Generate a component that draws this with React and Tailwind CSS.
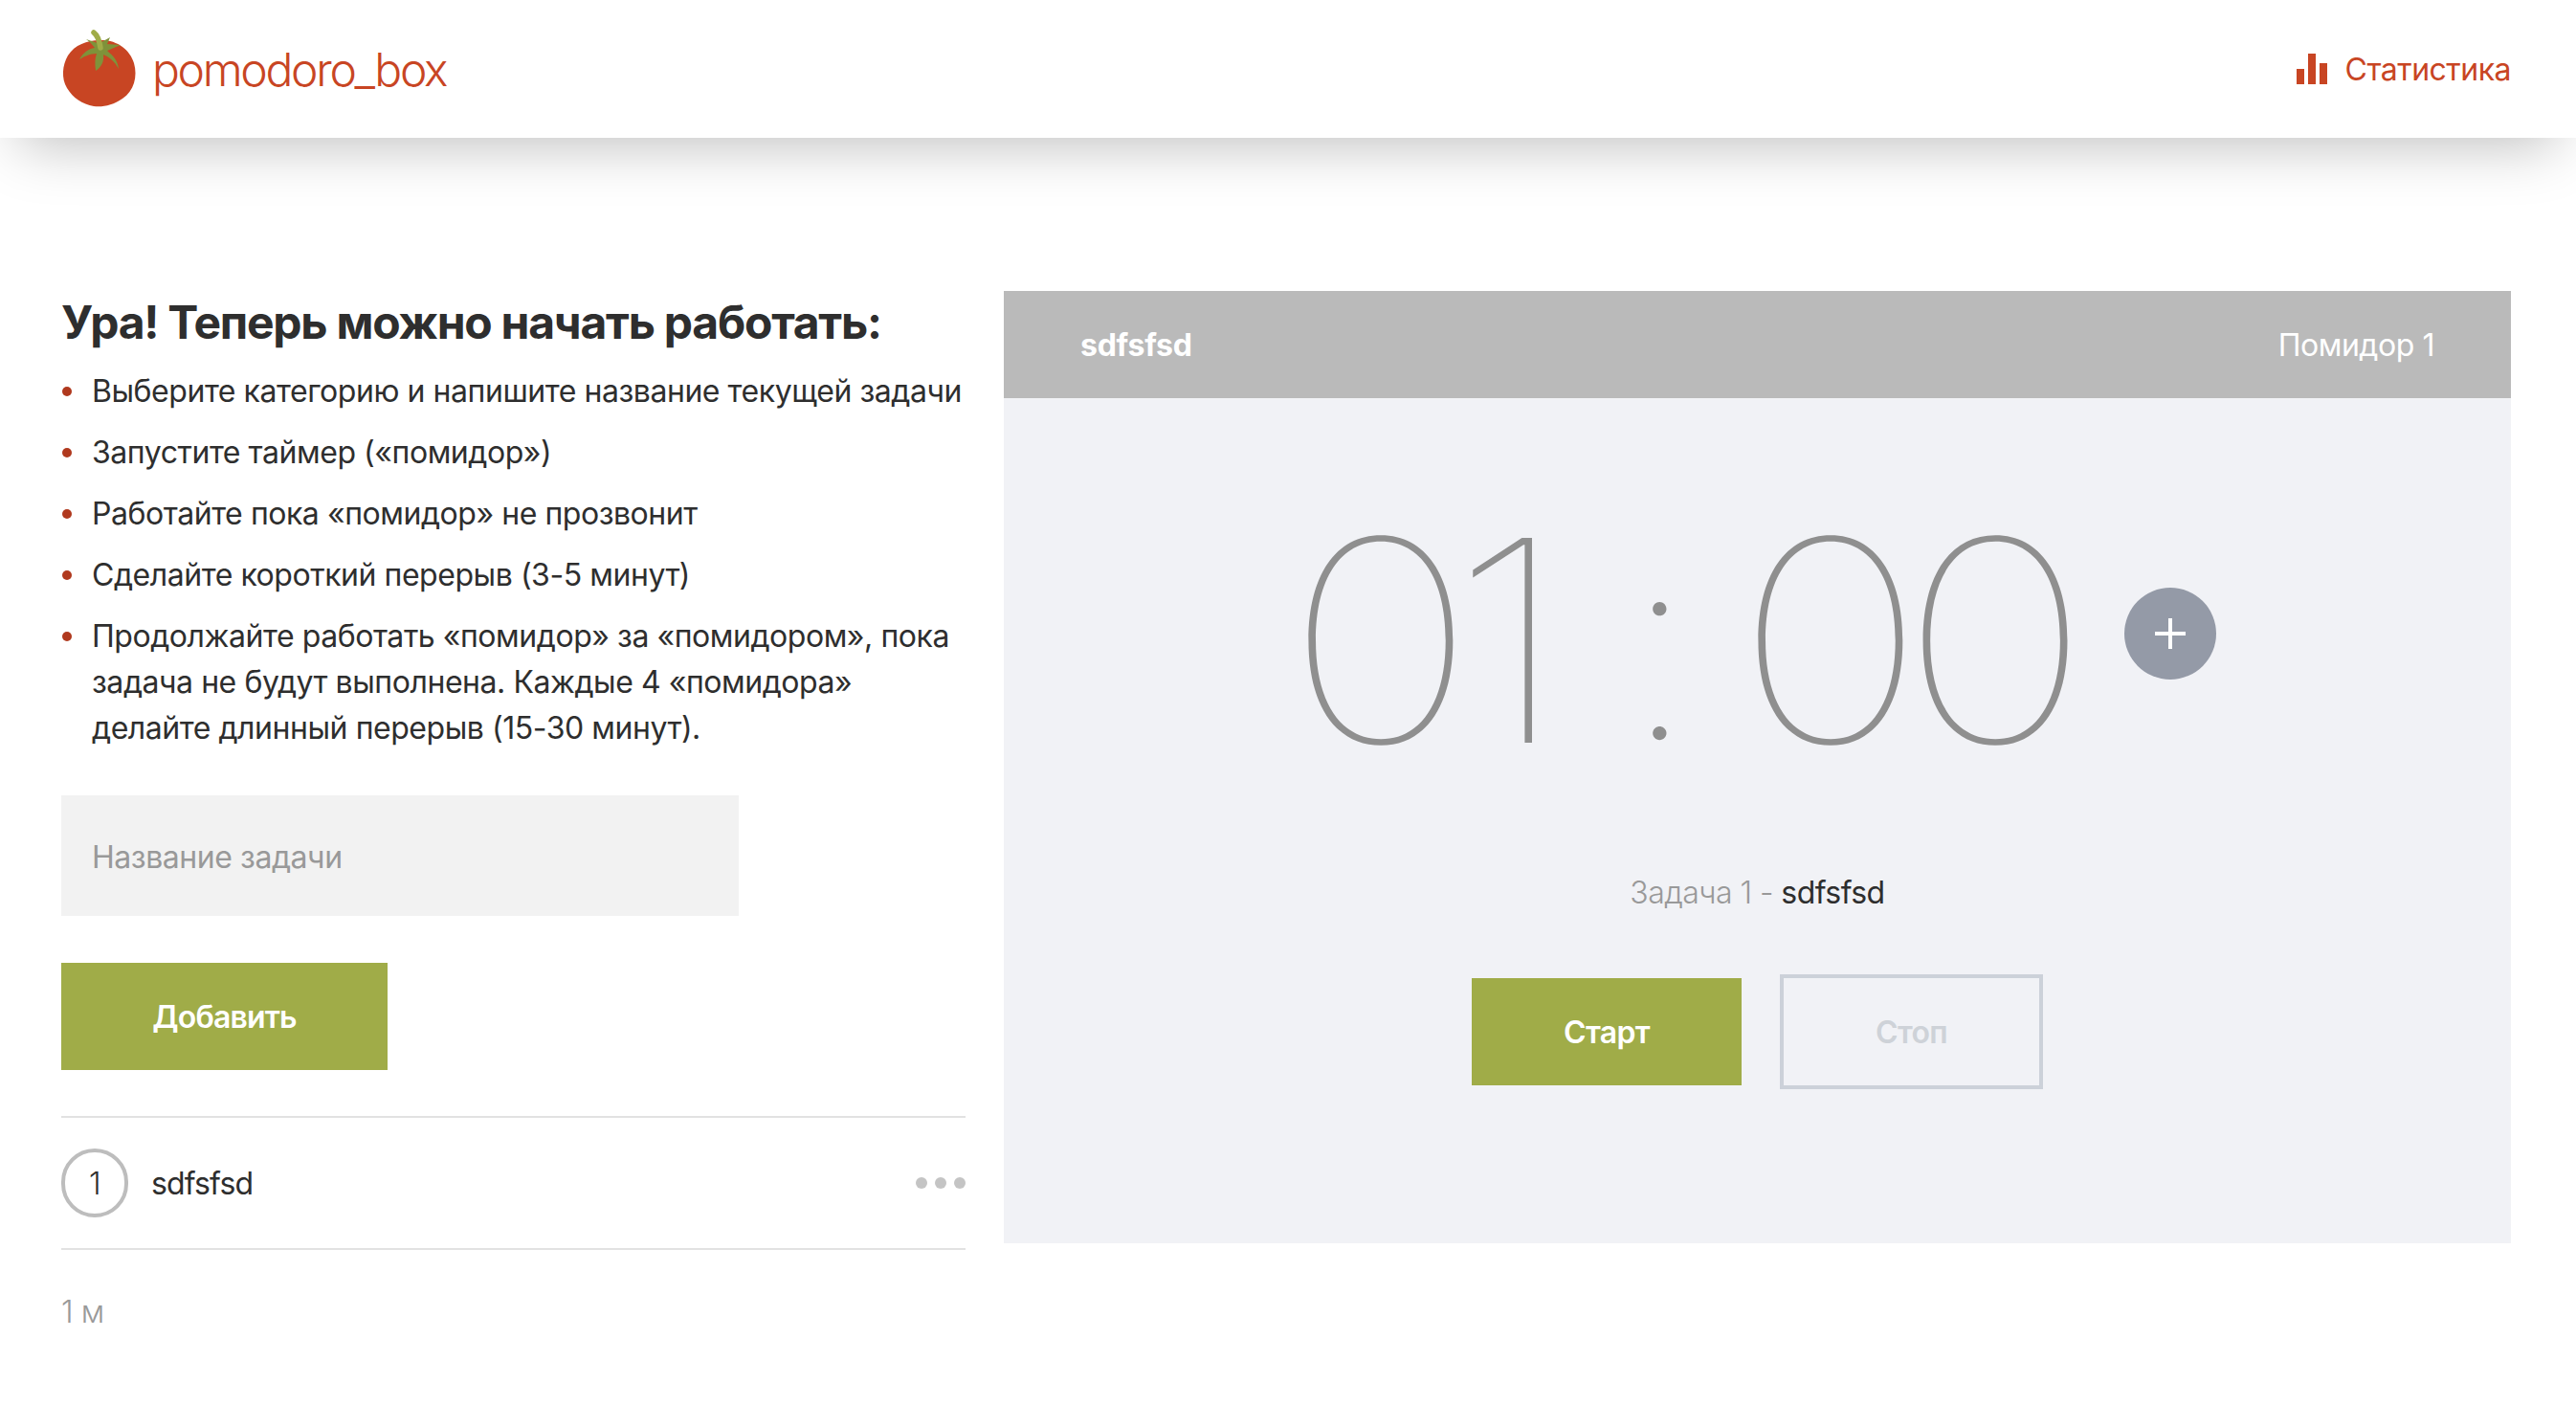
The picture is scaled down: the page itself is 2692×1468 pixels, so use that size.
import React from 'react';

const steps = [
    'Выберите категорию и напишите название текущей задачи',
    'Запустите таймер («помидор»)',
    'Работайте пока «помидор» не прозвонит',
    'Сделайте короткий перерыв (3-5 минут)',
    'Продолжайте работать «помидор» за «помидором», пока задача не будут выполнена. Каждые 4 «помидора» делайте длинный перерыв (15-30 минут).',
];

const TomatoLogo = () => (
    <svg viewBox="64 30 80 84" className="w-[80px] h-[84px] shrink-0">
        <path d="M104 42 C122 41 136 52 140 66 C144 80 140 95 128 103 C118 110 108 112 98 111 C86 109 76 102 70 92 C64 82 65 68 71 58 C78 47 91 42 104 42 Z" fill="#C84523" />
        <path d="M90 41 L102 45 L100 39 L106 44 L115 39 L112 46 L126 47 L112 53 C118 58 123 63 124 72 C120 64 113 59 108 57 C109 64 106 70 100 74 C99 67 99 61 101 56 C94 56 88 59 83 62 C87 55 92 51 99 50 C96 46 93 43 90 41 Z" fill="#7F923A" />
        <path d="M98 34 C102 37 104 43 105 50" fill="none" stroke="#A0AC48" strokeWidth="5.5" strokeLinecap="round" />
    </svg>
);

const App = () => {
    return (
        <div className="min-h-[1468px] bg-white text-[#2e2e2e] tracking-[-0.45px] font-['Inter','Liberation_Sans',sans-serif] overflow-hidden">
            <header className="relative h-[144px] flex items-center justify-between pl-16 pr-[68px] bg-white shadow-[0_28px_60px_-20px_rgba(0,0,0,0.25)]">
                <div className="flex items-center gap-[15px] text-[#C84523]">
                    <TomatoLogo />
                    <span className="text-[48px] font-light tracking-[-2.3px] leading-[60px] mt-[2px]">pomodoro_box</span>
                </div>
                <div className="flex items-center gap-[19px] text-[#C84523]">
                    <svg viewBox="0 0 32 32" className="w-[32px] h-[32px]" fill="currentColor">
                        <rect x="0" y="16" width="8" height="16" />
                        <rect x="12" y="0" width="8" height="32" />
                        <rect x="24" y="10" width="8" height="22" />
                    </svg>
                    <span className="text-[32px] leading-[48px] tracking-[-0.5px] mt-[2px]">Статистика</span>
                </div>
            </header>

            <main className="flex gap-10 pt-[160px] pl-16 pr-[68px]">
                {/* Instructions and task list */}
                <section className="w-[945px] shrink-0">
                    <h1 className="text-[48px] font-bold tracking-[-1.25px] leading-[66px] mb-[15px]">Ура! Теперь можно начать работать:</h1>
                    <ul className="mb-[46px]">
                        {steps.map((step) => (
                            <li key={step} className="relative pl-[32px] mb-4 last:mb-0 text-[32px] leading-[48px]">
                                <span className="absolute left-[1px] top-[19px] w-[10px] h-[10px] rounded-full bg-[#B0391E]" />
                                {step}
                            </li>
                        ))}
                    </ul>
                    <input
                        type="text"
                        placeholder="Название задачи"
                        className="block w-[708px] h-[126px] px-8 pt-[2px] bg-[#F2F2F2] text-[32px] tracking-[-0.45px] placeholder-[#999999] outline-none"
                    />
                    <button className="block w-[341px] h-[112px] mt-[49px] pt-[2px] bg-[#A0AC48] text-white text-[32px] font-semibold tracking-[-0.85px]">
                        Добавить
                    </button>
                    <div className="flex items-center h-[140px] mt-[48px] border-y-2 border-[#E2E2E2]">
                        <div className="flex items-center justify-center w-[70px] h-[72px] rounded-full border-4 border-[#BDBDBD] text-[32px] font-light pt-[2px]">1</div>
                        <span className="ml-[24px] pt-[2px] text-[32px] tracking-[-0.85px]">sdfsfsd</span>
                        <div className="ml-auto flex gap-2">
                            <span className="w-3 h-3 rounded-full bg-[#C4C4C4]" />
                            <span className="w-3 h-3 rounded-full bg-[#C4C4C4]" />
                            <span className="w-3 h-3 rounded-full bg-[#C4C4C4]" />
                        </div>
                    </div>
                    <p className="mt-[41px] text-[32px] leading-[48px] font-light text-[#999999]">1 м</p>
                </section>

                {/* Timer */}
                <section className="flex-1 h-[995px] bg-[#F1F2F6]">
                    <div className="flex items-center justify-between h-[112px] px-20 pt-[2px] bg-[#BABABA] text-white text-[32px]">
                        <span className="font-bold tracking-[-0.25px]">sdfsfsd</span>
                        <span>Помидор 1</span>
                    </div>
                    <div className="flex flex-col items-center pt-[115px]">
                        <div className="flex items-center">
                            <div className="flex h-[276px] text-[294px] leading-[276px] font-[125] tracking-normal text-[#8F8F8F]">
                                <span className="block w-[354px] whitespace-nowrap origin-left scale-x-[1.15] tracking-[-24px]">01</span>
                                <span className="block w-[116px] pt-[3px] text-[276px]">:</span>
                                <span className="block w-[407px] whitespace-nowrap origin-left scale-x-[1.15] tracking-[-24px]">00</span>
                            </div>
                            <button className="flex items-center justify-center w-[96px] h-[96px] mb-[14px] mr-[14px] rounded-full bg-[#949AA7]">
                                <svg viewBox="0 0 32 32" className="w-[32px] h-[32px]" fill="white">
                                    <rect x="14" y="0" width="4" height="32" />
                                    <rect x="0" y="14" width="32" height="4" />
                                </svg>
                            </button>
                        </div>
                        <p className="mt-[102px] text-[32px] leading-[48px] tracking-[-0.55px]">
                            <span className="font-light text-[#999999]">Задача 1 - </span>
                            <span>sdfsfsd</span>
                        </p>
                        <div className="flex items-center gap-10 mt-[61px]">
                            <button className="w-[282px] h-[112px] pt-[2px] bg-[#A0AC48] text-white text-[32px] font-semibold tracking-[-0.7px]">Старт</button>
                            <button className="w-[275px] h-[120px] pt-[2px] border-4 border-[#CCD1D9] text-[#CED2D8] text-[32px] font-semibold tracking-[-0.7px]">Стоп</button>
                        </div>
                    </div>
                </section>
            </main>
        </div>
    );
};

export default App;
